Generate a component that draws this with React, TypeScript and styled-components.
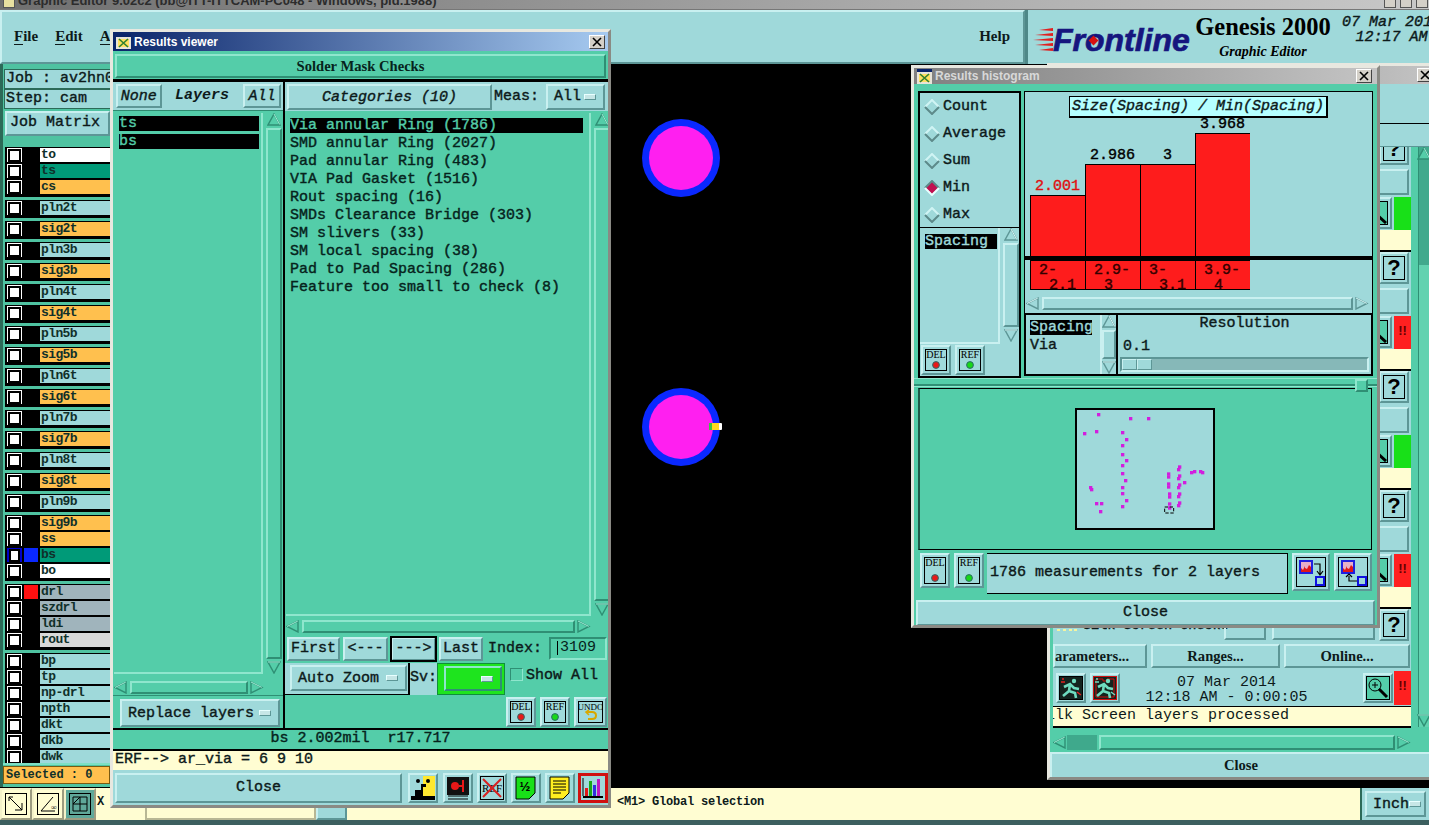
import React from 'react';
import styled, { createGlobalStyle, css } from 'styled-components';

const MONO = `"Liberation Mono", monospace`;
const SERIF = `"Liberation Serif", serif`;
const SANS = `"Liberation Sans", sans-serif`;
const TEAL = '#9fd9da';
const GREEN = '#54cda9';
const DARKGREEN = '#2f8a70';
const CREAM = '#fffdd2';
const ORANGE = '#ffc04e';

const raised = css`
  border: 2px solid;
  border-color: #c9f0f0 #5d9696 #5d9696 #c9f0f0;
  box-sizing: border-box;
`;
const raisedGreen = css`
  border: 2px solid;
  border-color: #8fe6cd #2f8f74 #2f8f74 #8fe6cd;
  box-sizing: border-box;
`;
const sunkenGreen = css`
  border: 2px solid;
  border-color: #2f8f74 #8fe6cd #8fe6cd #2f8f74;
  box-sizing: border-box;
`;
const noStroke = css`-webkit-text-stroke: 0;`;

const Global = createGlobalStyle`
  html, body { margin: 0; padding: 0; background: #000; overflow: hidden; }
  * { box-sizing: border-box; }
  svg text { -webkit-text-stroke: 0; }
`;

const Desktop = styled.div`
  position: relative;
  width: 1429px;
  height: 825px;
  overflow: hidden;
  display: flex;
  flex-direction: column;
  font-family: ${MONO};
  font-weight: 400;
  -webkit-text-stroke: 0.4px currentColor;
  font-size: 15px;
  color: #0d1a1a;
  background: #000;
`;

/* ---------- main window chrome ---------- */
const MainTitle = styled.div`
  height: 10px;
  flex: none;
  background: linear-gradient(90deg, #6f6f6f, #a8a8a8 60%, #c8c8c8);
  color: #2c2c2c;
  font: 700 13px/4px ${SANS};
  ${noStroke}
  padding-left: 3px;
  overflow: hidden;
  white-space: nowrap;
  display: flex;
  gap: 3px;
  border-bottom: 1px solid #777;
`;
const MainTitleIcon = styled.span`
  width: 12px;
  height: 8px;
  flex: none;
  background: #e8e0a0;
  border: 1px solid #555;
  border-top: none;
`;
const MainTitleText = styled.span`flex: 1; margin-top: -1px;`;
const WinCtl = styled.span`
  width: 12px; height: 8px; margin-right: 1px; background: #d4d0c8;
  border: 1px solid #555; border-top: none;
`;
const HeaderRow = styled.div`
  height: 54px;
  flex: none;
  display: flex;
  background: ${TEAL};
`;
const MenuBar = styled.div`
  flex: 1;
  ${raised}
  display: flex;
  align-items: center;
  padding: 0 13px 0 12px;
  font: 700 15px ${SERIF};
  ${noStroke}
  gap: 17px;
`;
const MenuItem = styled.span<{ $right?: boolean }>`
  ${p => p.$right && 'margin-left: auto;'}
  padding-bottom: 2px;
`;
const Under = styled.span`border-bottom: 1px solid #0d1a1a;`;
const BrandPanel = styled.div`
  width: 404px;
  flex: none;
  display: flex;
  position: relative;
  border-left: 3px solid #4e8888;
  padding-left: 5px;
  overflow: hidden;
  white-space: nowrap;
`;
const LogoRow = styled.div`display: flex; align-items: center; width: 160px; flex: none;`;
const LogoText = styled.span`
  font: italic 700 32px/1 ${SANS};
  -webkit-text-stroke: 0.7px #16167e;
  color: #16167e;
  margin-top: 6px;
`;
const BrandTitle = styled.div`
  width: 142px; flex: none; text-align: center; color: #000; margin-left: -1px;
  ${noStroke}
`;
const Genesis = styled.div`font: 700 24.5px/26px ${SERIF}; margin-top: 4px;`;
const Subtitle = styled.div`font: italic 700 14px/18px ${SERIF}; margin-top: 3px;`;
const BrandDate = styled.div`
  font: italic 400 15px/15px ${MONO};
  margin: 5px 0 0 8px;
  text-align: center;
  width: 100px;
`;

const Workspace = styled.div`flex: 1; display: flex; min-height: 0;`;

/* ---------- left layer panel ---------- */
const LeftPanel = styled.div`
  width: 110px;
  flex: none;
  background: #4fc3a1;
  border-left: 3px solid #2c6a58;
  display: flex;
  flex-direction: column;
  overflow: hidden;
`;
const InfoBox = styled.div<{ $mt?: number }>`
  height: 20px;
  margin-left: 1px;
  margin-top: ${p => p.$mt ?? 0}px;
  background: ${TEAL};
  border: 1px solid #2c6a58;
  border-right: none;
  line-height: 17px;
  padding-left: 1px;
  white-space: nowrap;
  overflow: hidden;
`;
const JobStrip = styled.div`
  height: 38px;
  padding: 2px 0 0 2px;
  flex: none;
`;
const JobBtn = styled.div`
  ${raised}
  height: 25px;
  background: ${TEAL};
  line-height: 20px;
  padding-left: 3px;
  white-space: nowrap;
  overflow: hidden;
`;
const LayerScroll = styled.div`
  flex: 1;
  min-height: 0;
  overflow: hidden;
  padding-left: 2px;
  display: flex;
  flex-direction: column;
  gap: 3px;
`;
const LayerGroup = styled.div`
  background: #000;
  padding: 1px 0 1px 2px;
  flex: none;
`;
const LayerRow = styled.div`
  display: flex;
  height: 16px;
  background: #000;
`;
const LayerCheck = styled.span<{ $on?: boolean }>`
  width: 15px;
  height: 14px;
  background: #fff;
  flex: none;
  display: flex;
  align-items: center;
  justify-content: center;
  ${p => p.$on && 'border: 2px solid #0000c8;'}
  &::after {
    content: '';
    width: 9px;
    height: 9px;
    border: 2px solid #000;
    background: #fff;
  }
`;
const Swatch = styled.span<{ $c?: string }>`
  width: 14px;
  height: 14px;
  margin: 0 2px 0 2px;
  flex: none;
  background: ${p => p.$c || '#000'};
`;
const LayerName = styled.span<{ $bg: string }>`
  flex: 1;
  height: 14px;
  background: ${p => p.$bg};
  font-size: 13px;
  font-weight: 700;
  letter-spacing: -0.6px;
  ${noStroke}
  line-height: 14px;
  padding-left: 1px;
  color: #10302a;
`;
const SelectedWrap = styled.div`
  height: 24px;
  flex: none;
  padding: 1px 0 2px 0;
  background: #4fc3a1;
  border-top: 2px solid #7de0c4;
`;
const SelectedBox = styled.div`
  background: ${ORANGE};
  height: 18px;
  font-size: 12px;
  font-weight: 700;
  ${noStroke}
  line-height: 16px;
  padding-left: 2px;
  border: 1px solid #7a5a10;
  color: #10302a;
`;

/* ---------- canvas ---------- */
const Canvas = styled.div`flex: 1; position: relative; background: #000;`;
const CanvasArt = styled.svg`position: absolute; inset: 0; width: 100%; height: 100%;`;

/* ---------- bottom bar ---------- */
const BottomBar = styled.div`
  height: 38px;
  flex: none;
  display: flex;
  background: ${CREAM};
  border-top: 1px solid #000;
  border-bottom: 5px solid #3c5f5f;
`;
const ToolBtn = styled.div<{ $pressed?: boolean }>`
  width: 32px;
  height: 32px;
  flex: none;
  border: 2px solid;
  border-color: #f4f2c8 #9d9c80 #9d9c80 #f4f2c8;
  background: ${p => (p.$pressed ? '#5fa89a' : CREAM)};
  display: flex;
  align-items: center;
  justify-content: center;
`;
const CoordLabel = styled.span`
  width: 49px;
  flex: none;
  font-size: 12px;
  font-weight: 700;
  ${noStroke}
  line-height: 28px;
  padding-left: 1px;
`;
const CoordInput = styled.div`
  width: 171px;
  flex: none;
  height: 32px;
  border: 2px solid #b8b794;
`;
const SmallBtn = styled.div`
  width: 31px;
  flex: none;
  height: 32px;
  background: ${TEAL};
  ${raised}
`;
const Message = styled.div`
  flex: 1;
  font-size: 12px;
  font-weight: 700;
  letter-spacing: -0.2px;
  ${noStroke}
  line-height: 28px;
  padding-left: 270px;
  white-space: nowrap;
`;
const UnitWrap = styled.div`
  width: 69px;
  flex: none;
  background: ${TEAL};
  border-left: 2px solid #2c6a58;
  padding: 3px;
`;
const Dropdown = styled.div<{ $green?: boolean }>`
  ${p => (p.$green ? raisedGreen : raised)}
  background: ${p => (p.$green ? '#1ee41e' : TEAL)};
  display: flex;
  align-items: center;
  justify-content: space-between;
  height: 100%;
  padding: 0 7px 0 6px;
  white-space: pre;
`;
const DropMark = styled.span`
  width: 12px;
  height: 6px;
  background: #c6e6e6;
  border: 1px solid;
  border-color: #e8ffff #5d9696 #5d9696 #e8ffff;
  flex: none;
`;

/* ---------- floating windows ---------- */
const Win = styled.div<{ $l: number; $t: number; $w: number; $h: number }>`
  position: absolute;
  left: ${p => p.$l}px;
  top: ${p => p.$t}px;
  width: ${p => p.$w}px;
  height: ${p => p.$h}px;
  background: #c8c8c0;
  border: 3px solid;
  border-color: #e8e8e0 #8a8a84 #8a8a84 #e8e8e0;
  display: flex;
  flex-direction: column;
  overflow: hidden;
`;
const WinTitle = styled.div<{ $active?: boolean; $h: number }>`
  height: ${p => p.$h}px;
  flex: none;
  display: flex;
  align-items: center;
  padding: 0 3px;
  gap: 3px;
  font: 700 12px ${SANS};
  ${noStroke}
  color: ${p => (p.$active ? '#fff' : '#d8d8d8')};
  background: ${p =>
    p.$active
      ? 'linear-gradient(90deg, #0a246a, #a6caf0)'
      : 'linear-gradient(90deg, #808080, #c4c4c4)'};
`;
const WinTitleText = styled.span`flex: 1; white-space: nowrap;`;
const CloseX = styled.span<{ $mr?: number }>`
  width: 16px;
  height: 14px;
  flex: none;
  margin-right: ${p => p.$mr ?? 0}px;
  background: #d4d0c8;
  border: 1px solid;
  border-color: #fff #444 #444 #fff;
  display: flex;
  align-items: center;
  justify-content: center;
`;
const WinBody = styled.div`
  flex: 1;
  min-height: 0;
  display: flex;
  flex-direction: column;
  background: ${TEAL};
`;

/* ---------- results viewer ---------- */
const HeadStrip = styled.div`
  height: 28px;
  flex: none;
  background: ${GREEN};
  padding: 3px 2px 1px 2px;
`;
const HeadBtn = styled.div`
  ${raisedGreen}
  height: 24px;
  text-align: center;
  font: 700 14.6px/20px ${SERIF};
  ${noStroke}
  color: #06231c;
`;
const BlackRule = styled.div<{ $h?: number }>`
  height: ${p => p.$h ?? 2}px;
  flex: none;
  background: #000;
`;
const Cols = styled.div`
  height: 646px;
  flex: none;
  display: flex;
  background: #000;
  gap: 2px;
`;
const LeftCol = styled.div`
  width: 170px;
  flex: none;
  display: flex;
  flex-direction: column;
  background: ${GREEN};
`;
const RightCol = styled.div`
  flex: 1;
  display: flex;
  flex-direction: column;
  background: ${GREEN};
`;
const TabRow = styled.div`
  height: 29px;
  flex: none;
  background: ${TEAL};
  display: flex;
  align-items: center;
  padding: 0 2px 0 3px;
  border-bottom: 1px solid ${DARKGREEN};
`;
const TabBtn = styled.div<{ $w: number; $flat?: boolean; $ml?: number }>`
  ${p => !p.$flat && raised}
  width: ${p => p.$w}px;
  margin-left: ${p => p.$ml ?? 0}px;
  height: 24px;
  text-align: center;
  font-style: italic;
  line-height: 22px;
  ${p => p.$flat && 'line-height: 24px; font-weight: 700; -webkit-text-stroke: 0;'}
`;
const ListWrap = styled.div<{ $h: number }>`
  height: ${p => p.$h}px;
  flex: none;
  display: flex;
  padding: 2px 0 0 1px;
`;
const ListBox = styled.div<{ $w: number; $pt: number; $pl: number }>`
  width: ${p => p.$w}px;
  flex: none;
  border-right: 2px solid #8fe6cd;
  border-bottom: 2px solid #8fe6cd;
  padding: ${p => p.$pt}px 0 0 ${p => p.$pl}px;
  color: #06231c;
`;
const ListItem = styled.div<{ $sel?: boolean; $w?: number; $fg?: string }>`
  height: 15px;
  line-height: 15px;
  margin-bottom: 3px;
  white-space: pre;
  ${p => p.$w && `width: ${p.$w}px;`}
  ${p => p.$sel && `background: #000; color: ${p.$fg || GREEN};`}
`;

const VScrollBox = styled.div<{ $h: number; $ml?: number }>`
  width: ${p => (p.$ml === 0 ? 14 : 16)}px;
  height: ${p => p.$h}px;
  flex: none;
  margin-left: ${p => p.$ml ?? 3}px;
  display: flex;
  flex-direction: column;
  align-items: center;
`;
const VThumb = styled.div<{ $teal?: boolean }>`
  flex: 1;
  width: 100%;
  margin: 2px 0;
  border: 2px solid;
  border-color: ${p =>
    p.$teal ? '#c9f0f0 #5d9696 #5d9696 #c9f0f0' : '#8fe6cd #2f8f74 #2f8f74 #8fe6cd'};
`;
const HScrollBox = styled.div<{ $w: number; $mt?: number; $ml?: number }>`
  width: ${p => p.$w}px;
  height: 13px;
  flex: none;
  margin-top: ${p => p.$mt ?? 0}px;
  margin-left: ${p => p.$ml ?? 1}px;
  display: flex;
  align-items: center;
`;
const HThumb = styled.div<{ $teal?: boolean }>`
  flex: 1;
  height: 100%;
  margin: 0 2px;
  border: 2px solid;
  border-color: ${p =>
    p.$teal ? '#c9f0f0 #5d9696 #5d9696 #c9f0f0' : '#8fe6cd #2f8f74 #2f8f74 #8fe6cd'};
`;
const ReplaceWrap = styled.div`
  height: 34px;
  flex: none;
  margin-top: 1px;
  padding: 3px 3px 2px 7px;
  border-top: 1px solid #2f8f74;
`;
const CatRow = styled.div`
  height: 29px;
  flex: none;
  display: flex;
  align-items: center;
  padding: 0 4px 0 2px;
  background: ${TEAL};
  gap: 2px;
`;
const CatBtn = styled.div`
  ${raised}
  width: 205px;
  height: 26px;
  text-align: center;
  font-style: italic;
  line-height: 24px;
`;
const MeasLabel = styled.span`width: 50px; flex: none;`;
const DropSlot = styled.div<{ $w?: number; $h?: number }>`
  flex: none;
  ${p => p.$w && `width: ${p.$w}px;`}
  height: ${p => p.$h ?? 26}px;
`;
const NavRow = styled.div`
  height: 25px;
  flex: none;
  margin-top: 3px;
  display: flex;
  align-items: center;
  padding-left: 2px;
  gap: 3px;
`;
const NavBtn = styled.div<{ $w: number; $on?: boolean }>`
  width: ${p => p.$w}px;
  height: 24px;
  flex: none;
  background: ${TEAL};
  text-align: center;
  line-height: 19px;
  ${raised}
  ${p => p.$on && 'outline: 2px solid #000; outline-offset: -1px;'}
`;
const IndexLabel = styled.span`width: 58px; flex: none; margin-left: 2px; line-height: 22px;`;
const IndexInput = styled.div`
  ${sunkenGreen}
  width: 58px;
  height: 23px;
  ${noStroke}
  line-height: 17px;
  padding-left: 4px;
  display: flex;
  color: #06231c;
`;
const Caret = styled.span`
  width: 5px;
  height: 14px;
  margin: 2px 0 0 0;
  flex: none;
  border-left: 1px solid #000;
  transform: translateX(2px);
`;
const AutoRow = styled.div`
  height: 32px;
  flex: none;
  margin-top: 2px;
  display: flex;
  align-items: stretch;
`;
const AutoWrap = styled.div`
  width: 125px;
  flex: none;
  padding: 2px 1px 3px 5px;
  background: ${TEAL};
  border-right: 2px solid #000;
  border-bottom: 1px solid #000;
`;
const SvLabel = styled.div`
  width: 27px;
  flex: none;
  line-height: 30px;
  background: ${TEAL};
`;
const SvWrap = styled.div`
  width: 68px;
  flex: none;
  background: #1ee41e;
  padding: 2px 2px 3px 6px;
  border: 1px solid #0f8f3a;
`;
const ShowAll = styled.div`
  display: flex;
  align-items: flex-start;
  padding: 5px 0 0 5px;
  gap: 3px;
  white-space: pre;
  line-height: 15px;
`;
const ShowBox = styled.span`
  width: 13px;
  height: 13px;
  flex: none;
  ${sunkenGreen}
  border-width: 1px;
`;
const ActionRow = styled.div`
  flex: 1;
  display: flex;
  justify-content: flex-end;
  gap: 4px;
  padding: 2px 3px 0 0;
`;
const StatusLine = styled.div`
  height: 19px;
  flex: none;
  background: ${GREEN};
  text-align: center;
  line-height: 18px;
  white-space: pre;
  color: #06231c;
`;
const CreamLine = styled.div`
  height: 19px;
  flex: none;
  background: ${CREAM};
  line-height: 18px;
  padding-left: 2px;
  white-space: pre;
`;
const BottomRow = styled.div`
  flex: 1;
  background: ${TEAL};
  display: flex;
  align-items: center;
  padding: 0 2px 0 2px;
`;
const BigClose = styled.div`
  width: 287px;
  height: 30px;
  flex: none;
  margin-right: 6px;
  background: ${TEAL};
  ${raised}
  text-align: center;
  line-height: 26px;
`;
const IconBtn = styled.div<{ $w?: number; $h?: number; $mr?: number; $red?: boolean }>`
  width: ${p => p.$w ?? 30}px;
  height: ${p => p.$h ?? 30}px;
  flex: none;
  margin-right: ${p => p.$mr ?? 0}px;
  background: ${TEAL};
  ${raised}
  display: flex;
  align-items: center;
  justify-content: center;
  padding: 1px;
  ${p => p.$red && 'border-color: #d01010;border-width: 3px;'}
`;

/* ---------- histogram ---------- */
const HistBody = styled.div`
  flex: 1;
  display: flex;
  flex-direction: column;
  background: ${GREEN};
`;
const Upper = styled.div`
  height: 287px;
  flex: none;
  margin-top: 7px;
  padding-left: 4px;
  display: flex;
  gap: 3px;
`;
const HistLeft = styled.div`
  width: 103px;
  flex: none;
  display: flex;
  flex-direction: column;
  background: ${TEAL};
  border: 2px solid #000;
`;
const Radios = styled.div`
  height: 135px;
  flex: none;
  border-bottom: 1px solid #000;
  display: flex;
  flex-direction: column;
`;
const RadioRow = styled.div`
  height: 27px;
  flex: none;
  display: flex;
  align-items: center;
  padding-left: 4px;
  gap: 3px;
`;
const HistList = styled.div`
  height: 116px;
  flex: none;
  display: flex;
`;
const SmallList = styled.div`
  flex: 1;
  border-right: 2px solid #c9f0f0;
  border-bottom: 2px solid #c9f0f0;
  padding: 6px 0 0 5px;
`;
const Pair = styled.div`display: flex; gap: 4px; padding: 1px 0 0 1px;`;
const HistRight = styled.div`
  width: 349px;
  flex: none;
  display: flex;
  flex-direction: column;
`;
const ChartPanel = styled.div`
  height: 222px;
  flex: none;
  background: ${TEAL};
  border: 1px solid #000;
  border-bottom: none;
  display: flex;
  flex-direction: column;
  padding-top: 4px;
`;
const ChartTitle = styled.div`
  width: 259px;
  height: 22px;
  flex: none;
  margin-left: 44px;
  background: #b6ffff;
  border: 1px solid #000;
  border-right-width: 2px;
  border-bottom-width: 2px;
  font-style: italic;
  text-align: center;
  line-height: 20px;
  white-space: nowrap;
`;
const Bars = styled.div`
  height: 138px;
  flex: none;
  display: flex;
  align-items: flex-end;
  padding-left: 5px;
`;
const BarCol = styled.div`
  width: 55px;
  flex: none;
  display: flex;
  flex-direction: column;
  align-items: center;
  line-height: 16px;
`;
const BarRect = styled.div`
  width: 100%;
  background: #fe1c1c;
  border: 1px solid #000;
  border-bottom: none;
  border-right: none;
`;
const BarValue = styled.span<{ $min?: boolean }>`
  color: ${p => (p.$min ? '#e01010' : '#000')};
`;
const AxisRule = styled.div`height: 4px; flex: none; background: #000;`;
const Axis = styled.div`
  height: 30px;
  flex: none;
  display: flex;
  padding-left: 5px;
`;
const AxisCell = styled.div`
  width: 55px;
  flex: none;
  height: 30px;
  background: #fe1c1c;
  border: 1px solid #000;
  border-right: none;
  overflow: hidden;
  color: #300;
  line-height: 15px;
  padding-top: 2px;
`;
const AxisLine = styled.div<{ $pl: number }>`padding-left: ${p => p.$pl}px; white-space: pre;`;
const ResRow = styled.div`
  height: 63px;
  flex: none;
  display: flex;
  border: 2px solid #000;
  background: ${TEAL};
`;
const ResList = styled.div`
  width: 76px;
  flex: none;
  padding: 5px 0 0 4px;
  border-right: 2px solid #c9f0f0;
  overflow: hidden;
`;
const ResPanel = styled.div`
  flex: 1;
  border-left: 2px solid #000;
  display: flex;
  flex-direction: column;
`;
const ResTitle = styled.div`text-align: center; line-height: 18px; height: 18px;`;
const ResValue = styled.div`padding-left: 5px; line-height: 18px; margin-top: 5px;`;
const ResTrack = styled.div`
  height: 15px;
  margin: 1px 2px 0 2px;
  background: #86b8b8;
  border: 2px solid;
  border-color: #5d9696 #c9f0f0 #c9f0f0 #5d9696;
  display: flex;
`;
const ResThumb = styled.div`
  width: 15px;
  height: 100%;
  background: ${TEAL};
  border: 1px solid;
  border-color: #c9f0f0 #5d9696 #5d9696 #c9f0f0;
`;
const Sash = styled.div`
  height: 10px;
  flex: none;
  position: relative;
  border-top: 1px solid #8fe6cd;
  &::before {
    content: '';
    position: absolute;
    left: 0; right: 0; top: 5px; height: 2px;
    background: #2f8f74;
    border-bottom: 1px solid #8fe6cd;
  }
  &::after {
    content: '';
    position: absolute;
    right: 9px; top: 0;
    width: 9px; height: 9px;
    background: ${GREEN};
    border: 2px solid;
    border-color: #8fe6cd #2f8f74 #2f8f74 #8fe6cd;
  }
`;
const Preview = styled.div`
  height: 162px;
  flex: none;
  margin: 0 5px 0 4px;
  border: 1px solid #000;
  border-left: 2px solid #1d5a48;
  display: flex;
  align-items: flex-start;
  padding-left: 155px;
  padding-top: 19px;
`;
const Thumb = styled.div`
  width: 140px;
  height: 122px;
  background: ${TEAL};
  border: 2px solid #000;
`;
const Footer = styled.div`
  height: 47px;
  flex: none;
  display: flex;
  align-items: flex-start;
  padding: 3px 0 0 6px;
  gap: 4px;
`;
const FootLabel = styled.div`
  width: 301px;
  height: 41px;
  flex: none;
  background: ${TEAL};
  border: 1px solid #000;
  border-left: 0;
  line-height: 38px;
  padding-left: 3px;
  white-space: pre;
  margin-left: -1px;
`;
const HistClose = styled.div`
  height: 26px;
  flex: none;
  margin: 3px 2px 0 2px;
  background: ${TEAL};
  ${raised}
  text-align: center;
  line-height: 22px;
`;

/* ---------- checks window behind ---------- */
const ChecksBody = styled.div`
  flex: 1;
  display: flex;
  background: ${TEAL};
  min-height: 0;
  flex-direction: column;
`;
const ChecksTop = styled.div`
  height: 40px;
  flex: none;
  border-bottom: 1px solid #000;
`;
const ChecksGap = styled.div`height: 23px; flex: none; border-bottom: 1px solid #5d9696;`;
const ChecksMain = styled.div`
  flex: 1;
  display: flex;
  background: ${GREEN};
  min-height: 0;
  padding-left: 3px;
`;
const ChecksCol = styled.div`
  width: 358px;
  flex: none;
  display: flex;
  flex-direction: column;
`;
const Blocks = styled.div`
  height: 497px;
  flex: none;
  overflow: hidden;
  background: ${TEAL};
`;
const BlocksInner = styled.div`margin-top: -14px;`;
const CheckBlock = styled.div`
  height: 119px;
  display: flex;
  flex-direction: column;
  align-items: flex-end;
`;
const QBtn = styled.div`
  width: 30px;
  height: 32px;
  flex: none;
  margin-right: 2px;
  ${raised}
  padding: 2px;
`;
const QInner = styled.div`
  height: 100%;
  border: 1px solid #000;
  font: 700 22px/22px ${SANS};
  ${noStroke}
  text-align: center;
  color: #000;
`;
const BlankBtn = styled.div`
  width: 350px;
  height: 26px;
  flex: none;
  margin: 4px 2px 2px 0;
  ${raised}
`;
const StatusRow = styled.div`
  height: 33px;
  flex: none;
  display: flex;
  gap: 2px;
`;
const MiniBtn = styled.div`
  width: 29px;
  height: 32px;
  ${raised}
  padding: 2px;
`;
const MiniInner = styled.div`
  height: 100%;
  background: ${GREEN};
  border: 1px solid #000;
  overflow: hidden;
  display: flex;
  align-items: flex-end;
  justify-content: flex-end;
`;
const StatusLight = styled.div<{ $c: string; $h?: number; $ml?: number }>`
  width: 17px;
  ${p => p.$h && `height: ${p.$h}px;`}
  margin-left: ${p => p.$ml ?? 0}px;
  background: ${p => p.$c};
  color: #600;
  text-align: center;
  font: 700 13px/30px ${SANS};
  ${noStroke}
`;
const CreamCell = styled.div`
  width: 358px;
  height: 22px;
  flex: none;
  background: ${CREAM};
  border-bottom: 2px solid #000;
`;
const SilkRow = styled.div`
  display: flex;
  width: 100%;
  height: 35px;
  align-items: flex-start;
`;
const SilkName = styled.div`
  width: 141px;
  flex: none;
  white-space: pre;
  margin: 9px 0 0 5px;
  line-height: 16px;
  font-size: 13.5px;
`;
const ErfBtn = styled.div`
  width: 42px;
  height: 31px;
  flex: none;
  ${raised}
  text-align: center;
  line-height: 25px;
`;
const SilkInput = styled.div`
  width: 103px;
  height: 31px;
  flex: none;
  margin: 0 auto 0 6px;
  ${raised}
`;
const ParamRow = styled.div`
  height: 26px;
  flex: none;
  display: flex;
  gap: 4px;
  background: ${TEAL};
  overflow: hidden;
`;
const ParamBtn = styled.div<{ $w: number; $clip?: boolean }>`
  ${raised}
  width: ${p => p.$w}px;
  flex: none;
  height: 24px;
  font: 700 14.6px/20px ${SERIF};
  ${noStroke}
  text-align: center;
  ${p => p.$clip && 'text-align: right; padding-right: 20px; white-space: nowrap; overflow: hidden;'}
`;
const ProgRow = styled.div`
  height: 36px;
  flex: none;
  display: flex;
  background: ${TEAL};
  align-items: center;
  padding-left: 3px;
  gap: 4px;
`;
const ProgCenter = styled.div`
  flex: 1;
  text-align: center;
  font-size: 15px;
  line-height: 15px;
  padding: 4px 30px 0 0;
  white-space: pre;
  ${noStroke}
`;
const ProgMsg = styled.div`
  height: 22px;
  flex: none;
  background: ${CREAM};
  border-top: 1px solid #000;
  border-bottom: 2px solid #000;
  font-size: 15px;
  ${noStroke}
  line-height: 18px;
  white-space: pre;
  overflow: hidden;
`;
const ProgMsgIn = styled.div`margin-left: -16px;`;
const Trough = styled.div`
  width: 11px;
  flex: none;
  margin-left: 7px;
  height: 580px;
  background: linear-gradient(#41a98d 118px, #62d2b0 118px);
  border-left: 1px solid #2f8f74;
  display: flex;
  flex-direction: column;
  justify-content: space-between;
  align-items: center;
`;
const CheckHS = styled.div`
  height: 15px;
  flex: none;
  margin-top: 7px;
  display: flex;
  align-items: center;
`;
const HSDark = styled.div`
  width: 30px;
  flex: none;
  height: 100%;
  background: #3fa98c;
`;
const CheckClose = styled.div`
  height: 27px;
  flex: none;
  margin-top: 2px;
  background: ${TEAL};
  ${raised}
  text-align: center;
  font: 700 14.6px/23px ${SERIF};
  ${noStroke}
`;
const CloseWrap = styled.div`
  background: ${GREEN};
  width: 382px;
  margin-left: -3px;
`;
const LogoDiamond = styled.span`
  position: absolute;
  left: 62px;
  top: 27px;
  width: 7px;
  height: 7px;
  background: #d81010;
  transform: rotate(45deg);
`;

/* ---------- small drawings ---------- */
const WindowIcon = () => (
  <svg width="15" height="15" viewBox="0 0 15 15">
    <rect width="15" height="15" fill="#e8e4d8" />
    <rect width="15" height="3" fill="#0a246a" />
    <rect x="2" y="5" width="11" height="8" fill="#ffe060" />
    <path d="M3 5l9 8M12 5l-9 8" stroke="#308030" strokeWidth="1.6" />
  </svg>
);
const XMark = () => (
  <svg width="10" height="10" viewBox="0 0 10 10">
    <path d="M1 1l8 8M9 1l-8 8" stroke="#000" strokeWidth="1.6" />
  </svg>
);
const ArrowSvg = styled.svg`flex: none;`;
const Arrow = ({ d, teal }: { d: 'u' | 'd' | 'l' | 'r'; teal?: boolean }) => {
  const pts = { u: '7,1 13,12 1,12', d: '1,1 13,1 7,12', l: '1,6.5 12,1 12,12', r: '1,1 12,6.5 1,12' }[d];
  return (
    <ArrowSvg width="14" height="13" viewBox="0 0 14 13">
      <polygon points={pts} fill={teal ? '#9fd9da' : '#54cda9'} stroke={teal ? '#5d9696' : '#2f8f74'} strokeWidth="1.4" />
      <polyline points={pts} fill="none" stroke={teal ? '#d8f6f6' : '#a0ecd6'} strokeWidth="1" strokeDasharray="12 30" />
    </ArrowSvg>
  );
};
const VScroll = ({ h, teal, ml }: { h: number; teal?: boolean; ml?: number }) => (
  <VScrollBox $h={h} $ml={ml}>
    <Arrow d="u" teal={teal} />
    <VThumb $teal={teal} />
    <Arrow d="d" teal={teal} />
  </VScrollBox>
);
const HScroll = ({ w, mt, teal, ml }: { w: number; mt?: number; teal?: boolean; ml?: number }) => (
  <HScrollBox $w={w} $mt={mt} $ml={ml}>
    <Arrow d="l" teal={teal} />
    <HThumb $teal={teal} />
    <Arrow d="r" teal={teal} />
  </HScrollBox>
);
const DotButton = ({ label, color, w = 30, h = 30 }: { label: string; color: string; w?: number; h?: number }) => (
  <IconBtn $w={w} $h={h}>
    <svg width={w - 8} height={h - 8} viewBox={`0 0 ${w - 8} ${h - 8}`}>
      <rect x="0.5" y="0.5" width={w - 9} height={h - 9} fill="none" stroke="#000" />
      <text x={(w - 8) / 2} y="9" textAnchor="middle" fontFamily={SERIF} fontSize="10" fill="#000">{label}</text>
      <circle cx={(w - 8) / 2} cy={h - 14} r="3.4" fill={color} stroke="#2a6a6a" />
    </svg>
  </IconBtn>
);
const UndoButton = () => (
  <IconBtn $w={33} $h={30}>
    <svg width="25" height="22" viewBox="0 0 25 22">
      <rect x="0.5" y="0.5" width="24" height="21" fill="none" stroke="#000" />
      <text x="12.5" y="9" textAnchor="middle" fontFamily={SERIF} fontSize="9" fill="#000">UNDO</text>
      <path d="M9 11h5q4 0 4 3.5t-4 3.5h-4" fill="none" stroke="#d8a800" strokeWidth="2" />
      <path d="M11 9l-3 2 3 3" fill="none" stroke="#d8a800" strokeWidth="1.6" />
    </svg>
  </IconBtn>
);
const Icon1 = () => (
  <svg width="24" height="24" viewBox="0 0 24 24">
    <rect width="12" height="24" fill="#9fd9da" />
    <rect x="12" width="12" height="24" fill="#ffe830" />
    <rect y="20" width="24" height="4" fill="#000" />
    <circle cx="7" cy="5" r="2" fill="#000" />
    <path d="M10 20V8h5v3h-3v9zM4 14h6v6H4z" fill="#000" />
    <circle cx="17" cy="5" r="2" fill="#000" />
  </svg>
);
const Icon2 = () => (
  <svg width="24" height="24" viewBox="0 0 24 24">
    <rect x="1" y="1" width="22" height="18" fill="#111" />
    <circle cx="9" cy="10" r="4" fill="#e81818" />
    <rect x="13" y="9" width="5" height="2" fill="#e81818" />
    <rect x="16" y="4" width="2" height="12" fill="#e81818" />
    <path d="M2 20h20M2 23h20" stroke="#000" strokeWidth="1.2" />
  </svg>
);
const Icon3 = () => (
  <svg width="24" height="24" viewBox="0 0 24 24">
    <rect x="0.5" y="0.5" width="23" height="23" fill="none" stroke="#000" />
    <text x="12" y="16" textAnchor="middle" fontFamily={SERIF} fontSize="11" fill="#000">REF</text>
    <path d="M3 3l18 18M21 3L3 21" stroke="#d82020" strokeWidth="2" />
  </svg>
);
const Icon4 = () => (
  <svg width="24" height="24" viewBox="0 0 24 24">
    <polygon points="2,1 21,1 21,17 15,23 2,23" fill="#18e018" stroke="#000" />
    <text x="11" y="15" textAnchor="middle" fontFamily={SANS} fontWeight="700" fontSize="13" fill="#000">½</text>
  </svg>
);
const Icon5 = () => (
  <svg width="24" height="24" viewBox="0 0 24 24">
    <polygon points="2,1 21,1 21,17 15,23 2,23" fill="#ffee20" stroke="#000" />
    <path d="M5 5h13M5 8h13M5 11h13M5 14h13M5 17h8" stroke="#000" strokeWidth="1.2" />
  </svg>
);
const Icon6 = () => (
  <svg width="22" height="22" viewBox="0 0 22 22">
    <rect x="3" y="11" width="3" height="8" fill="#e01818" />
    <rect x="7" y="4" width="3" height="15" fill="#18a818" />
    <rect x="11" y="8" width="3" height="11" fill="#3030e0" />
    <rect x="15" y="2" width="3" height="17" fill="#c018c0" />
    <path d="M1 20h20" stroke="#000" strokeWidth="2" />
    <path d="M1 1v18" stroke="#000" />
  </svg>
);
const HistSwap = ({ back }: { back?: boolean }) => (
  <svg width="30" height="30" viewBox="0 0 30 30">
    <rect x="0.5" y="0.5" width="29" height="29" fill="none" stroke="#000" />
    <rect x="3" y="3" width="14" height="14" fill="#2020e0" />
    <rect x="5" y="5" width="10" height="10" fill="#e8b0c8" />
    <path d="M5 15v-4l2 2 2-4v2l2 1 2-4 2 2v5z" fill="#e01818" />
    <rect x="20" y="20" width="8" height="8" fill="none" stroke="#1010e0" strokeWidth="2" />
    {back ? (
      <path d="M19 24h-8V19M8 20l3-3 3 3" fill="none" stroke="#000" strokeWidth="1.2" />
    ) : (
      <path d="M18 7h6v10M21 14l3 4 3-4" fill="none" stroke="#000" strokeWidth="1.2" />
    )}
  </svg>
);
const Runner = ({ red }: { red?: boolean }) => (
  <svg width="24" height="24" viewBox="0 0 24 24">
    <rect x="0.5" y="0.5" width="23" height="23" fill="#14241f" stroke={red ? '#d01010' : '#000'} />
    {red && <path d="M3 3h7v2h4V3h7v18H3z" fill="none" stroke="#d01010" />}
    <circle cx="15" cy="5" r="2.2" fill="#6fdcc0" />
    <path d="M5 11l6-3 4 4 5 1M11 8l-1 7-6 5M10 15l6 2 1 5" fill="none" stroke="#6fdcc0" strokeWidth="2.6" />
    <path d="M2 6h4M3 3h2M18 16l4 3" stroke={red ? '#6fdcc0' : '#e02020'} strokeWidth="1.4" />
  </svg>
);
const Magnifier = () => (
  <svg width="24" height="24" viewBox="0 0 24 24">
    <rect x="0.5" y="0.5" width="23" height="23" fill={GREEN} stroke="#000" />
    <circle cx="9" cy="9" r="6" fill="none" stroke="#000" />
    <path d="M6 9h6M9 6v6" stroke="#000" />
    <path d="M13 13l8 8" stroke="#000" strokeWidth="3" />
  </svg>
);
const MiniTail = () => (
  <svg width="11" height="11" viewBox="0 0 11 11">
    <path d="M0 1l10 9" stroke="#000" strokeWidth="3" />
  </svg>
);
const Trees = () => (
  <svg width="22" height="10" viewBox="0 0 22 10" style={{ marginLeft: 3, marginTop: 12 }}>
    <path d="M0 6l3-6 3 6 2-6 3 6 3-6 2 6 3-6 3 6z" fill="#0e6a50" />
    <path d="M1 9h3M7 9h3M13 9h3M18 9h3" stroke="#f4f4a0" strokeWidth="2" />
  </svg>
);
const Diamond = ({ on }: { on?: boolean }) => (
  <svg width="16" height="16" viewBox="0 0 16 16" style={{ flex: 'none' }}>
    <polygon points="8,1 15,8 8,15 1,8" fill={on ? '#c01050' : '#9fd9da'} />
    <polyline points="1,8 8,1 15,8" fill="none" stroke={on ? '#5d8a8a' : '#d0f4f4'} strokeWidth="2" />
    <polyline points="1,8 8,15 15,8" fill="none" stroke={on ? '#e8ffff' : '#5d8a8a'} strokeWidth="2" />
  </svg>
);
const ToolGlyph = ({ kind }: { kind: number }) => (
  <svg width="22" height="22" viewBox="0 0 22 22">
    <rect x="0.5" y="0.5" width="21" height="21" fill="none" stroke="#000" />
    {kind === 0 && <path d="M4 4l13 13M17 10v7h-7M4 4h4M4 4v4" fill="none" stroke="#000" />}
    {kind === 1 && (
      <>
        <path d="M4 18l12-14M4 18h14" fill="none" stroke="#000" />
        <text x="14" y="17" fontFamily={SERIF} fontSize="8" fill="#000">∞</text>
      </>
    )}
    {kind === 2 && <path d="M4 4h14v14H4zM4 11h14M11 4v14M4 11l7-7" fill="none" stroke="#000" />}
  </svg>
);

/* ---------- data ---------- */
const T = TEAL;
const O = ORANGE;
const W = '#ffffff';
const G = '#009a78';
const S = '#a0b4bc';
type L = { n: string; bg: string; sw?: string; on?: boolean };
const GROUPS: L[][] = [
  [{ n: 'to', bg: W }, { n: 'ts', bg: G }, { n: 'cs', bg: O }],
  [{ n: 'pln2t', bg: T }], [{ n: 'sig2t', bg: O }], [{ n: 'pln3b', bg: T }], [{ n: 'sig3b', bg: O }],
  [{ n: 'pln4t', bg: T }], [{ n: 'sig4t', bg: O }], [{ n: 'pln5b', bg: T }], [{ n: 'sig5b', bg: O }],
  [{ n: 'pln6t', bg: T }], [{ n: 'sig6t', bg: O }], [{ n: 'pln7b', bg: T }], [{ n: 'sig7b', bg: O }],
  [{ n: 'pln8t', bg: T }], [{ n: 'sig8t', bg: O }], [{ n: 'pln9b', bg: T }],
  [{ n: 'sig9b', bg: O }, { n: 'ss', bg: O }, { n: 'bs', bg: G, sw: '#0a28ff', on: true }, { n: 'bo', bg: W }],
  [{ n: 'drl', bg: S, sw: '#ff1010' }, { n: 'szdrl', bg: S }, { n: 'ldi', bg: S }, { n: 'rout', bg: '#d8d8d8' }],
  [{ n: 'bp', bg: T }, { n: 'tp', bg: T }, { n: 'np-drl', bg: T }, { n: 'npth', bg: T }, { n: 'dkt', bg: T }, { n: 'dkb', bg: T }, { n: 'dwk', bg: T }],
];
const CATS = [
  'Via annular Ring (1786)', 'SMD annular Ring (2027)', 'Pad annular Ring (483)', 'VIA Pad Gasket (1516)',
  'Rout spacing (16)', 'SMDs Clearance Bridge (303)', 'SM slivers (33)', 'SM local spacing (38)',
  'Pad to Pad Spacing (286)', 'Feature too small to check (8)',
];
const BARS = [
  { v: '2.001', h: 61, min: true, a: '2-', ap: 8, b: '2.1', bp: 18 },
  { v: '2.986', h: 92, a: '2.9-', ap: 8, b: '3', bp: 18 },
  { v: '3', h: 92, a: '3-', ap: 8, b: '3.1', bp: 18 },
  { v: '3.968', h: 123, a: '3.9-', ap: 8, b: '4', bp: 18 },
];
const DOTS = [
  [553,106],[649,118],[703,118],[511,163],[547,157],[625,160],[637,181],[625,199],[625,226],[637,244],[625,259],
  [625,283],[634,304],[625,325],[625,343],[637,364],[625,382],[529,325],[532,331],[547,373],[562,373],[559,397],
  [763,284],[763,293],[763,314],[763,323],[766,344],[766,353],[766,374],[766,386],[796,263],[793,271],[796,290],
  [793,298],[796,317],[793,325],[796,344],[793,352],[796,371],[793,379],[811,310],[832,280],[841,277],[859,277],[865,280],
];
const RADIOS = ['Count', 'Average', 'Sum', 'Min', 'Max'];

const Block = ({ c, bang }: { c: string; bang?: boolean }) => (
  <CheckBlock>
    <QBtn><QInner>?</QInner></QBtn>
    <BlankBtn />
    <StatusRow>
      <MiniBtn><MiniInner><MiniTail /></MiniInner></MiniBtn>
      <StatusLight $c={c}>{bang ? '!!' : ''}</StatusLight>
    </StatusRow>
    <CreamCell />
  </CheckBlock>
);

export default function App() {
  return (
    <Desktop>
      <Global />
      <MainTitle>
        <MainTitleIcon />
        <MainTitleText>Graphic Editor 9.02c2 (bb@ITT-ITTCAM-PC048 - Windows, pid.1988)</MainTitleText>
        <WinCtl /><WinCtl /><WinCtl />
      </MainTitle>
      <HeaderRow>
        <MenuBar>
          <MenuItem><Under>F</Under>ile</MenuItem>
          <MenuItem><Under>E</Under>dit</MenuItem>
          <MenuItem><Under>A</Under>ctions</MenuItem>
          <MenuItem $right>Help</MenuItem>
        </MenuBar>
        <BrandPanel>
          <LogoRow>
            <svg width="20" height="24" viewBox="0 0 20 24" style={{ flex: 'none', marginTop: 6 }}>
              <path d="M20 0 6 2 20 3zM20 5 2 7 20 8zM20 10 0 12 20 13zM20 15 2 17 20 18zM20 20 6 22 20 23z" fill="#e02020" />
            </svg>
            <LogoText>Frontline</LogoText>
            <LogoDiamond />
          </LogoRow>
          <BrandTitle>
            <Genesis>Genesis 2000</Genesis>
            <Subtitle>Graphic Editor</Subtitle>
          </BrandTitle>
          <BrandDate>07 Mar 2014<br />12:17 AM</BrandDate>
        </BrandPanel>
      </HeaderRow>
      <Workspace>
        <LeftPanel>
          <InfoBox $mt={5}>Job : av2hn0</InfoBox>
          <InfoBox>Step: cam</InfoBox>
          <JobStrip><JobBtn>Job Matrix</JobBtn></JobStrip>
          <LayerScroll>
            {GROUPS.map((g, i) => (
              <LayerGroup key={i}>
                {g.map(l => (
                  <LayerRow key={l.n}>
                    <LayerCheck $on={l.on} />
                    <Swatch $c={l.sw} />
                    <LayerName $bg={l.bg}>{l.n}</LayerName>
                  </LayerRow>
                ))}
              </LayerGroup>
            ))}
          </LayerScroll>
          <SelectedWrap><SelectedBox>Selected : 0</SelectedBox></SelectedWrap>
        </LeftPanel>
        <Canvas>
          <CanvasArt viewBox="110 64 1319 723">
            <circle cx="681" cy="158" r="39" fill="#0a28ff" />
            <circle cx="681" cy="158" r="32" fill="#ff1ff0" />
            <circle cx="681" cy="427" r="39" fill="#0a28ff" />
            <circle cx="681" cy="427" r="32" fill="#ff1ff0" />
            <rect x="709" y="423" width="4" height="7" fill="#40c040" />
            <rect x="712" y="423" width="8" height="7" fill="#ffd820" />
            <rect x="719" y="423" width="3" height="7" rx="1" fill="#fff" />
          </CanvasArt>
        </Canvas>
      </Workspace>
      <BottomBar>
        <ToolBtn><ToolGlyph kind={0} /></ToolBtn>
        <ToolBtn><ToolGlyph kind={1} /></ToolBtn>
        <ToolBtn $pressed><ToolGlyph kind={2} /></ToolBtn>
        <CoordLabel>X</CoordLabel>
        <CoordInput />
        <SmallBtn />
        <Message>{'<M1> Global selection'}</Message>
        <UnitWrap><Dropdown>Inch<DropMark /></Dropdown></UnitWrap>
      </BottomBar>

      {/* checks window, behind the two others */}
      <Win $l={1047} $t={63} $w={392} $h={717}>
        <WinTitle $h={18}>
          <WinTitleText />
          <CloseX><XMark /></CloseX>
        </WinTitle>
        <ChecksBody>
          <ChecksTop />
          <ChecksGap />
          <ChecksMain>
            <ChecksCol>
              <Blocks>
                <BlocksInner>
                  <Block c="#18e018" />
                  <Block c="#ff2020" bang />
                  <Block c="#18e018" />
                  <Block c="#ff2020" bang />
                  <SilkRow>
                    <Trees />
                    <SilkName>Silk Screen Checks</SilkName>
                    <ErfBtn>ERF</ErfBtn>
                    <SilkInput />
                    <QBtn><QInner>?</QInner></QBtn>
                  </SilkRow>
                </BlocksInner>
              </Blocks>
              <ParamRow>
                <ParamBtn $w={94} $clip>arameters...</ParamBtn>
                <ParamBtn $w={129}>Ranges...</ParamBtn>
                <ParamBtn $w={126}>Online...</ParamBtn>
              </ParamRow>
              <ProgRow>
                <IconBtn $w={30} $h={30}><Runner /></IconBtn>
                <IconBtn $w={30} $h={30}><Runner red /></IconBtn>
                <ProgCenter>{'07 Mar 2014\n12:18 AM - 0:00:05'}</ProgCenter>
                <IconBtn $w={30} $h={30}><Magnifier /></IconBtn>
                <StatusLight $c="#ff2020" $h={34} $ml={-3}>!!</StatusLight>
              </ProgRow>
              <ProgMsg><ProgMsgIn>Silk Screen layers processed</ProgMsgIn></ProgMsg>
              <CheckHS>
                <Arrow d="l" />
                <HSDark />
                <HThumb />
                <Arrow d="r" />
              </CheckHS>
              <CloseWrap><CheckClose>Close</CheckClose></CloseWrap>
            </ChecksCol>
            <Trough>
              <Arrow d="u" />
              <Arrow d="d" />
            </Trough>
          </ChecksMain>
        </ChecksBody>
      </Win>

      {/* results histogram */}
      <Win $l={911} $t={65} $w={469} $h={563}>
        <WinTitle $h={16}>
          <WindowIcon />
          <WinTitleText>Results histogram</WinTitleText>
          <CloseX $mr={2}><XMark /></CloseX>
        </WinTitle>
        <HistBody>
          <Upper>
            <HistLeft>
              <Radios>
                {RADIOS.map(r => (
                  <RadioRow key={r}><Diamond on={r === 'Min'} />{r}</RadioRow>
                ))}
              </Radios>
              <HistList>
                <SmallList>
                  <ListItem $sel $w={72} $fg={TEAL}>Spacing</ListItem>
                </SmallList>
                <VScroll h={114} teal />
              </HistList>
              <Pair>
                <DotButton label="DEL" color="#e81818" />
                <DotButton label="REF" color="#18d818" />
              </Pair>
            </HistLeft>
            <HistRight>
              <ChartPanel>
                <ChartTitle>Size(Spacing) / Min(Spacing)</ChartTitle>
                <Bars>
                  {BARS.map(b => (
                    <BarCol key={b.v}>
                      <BarValue $min={b.min}>{b.v}</BarValue>
                      <BarRect style={{ height: b.h }} />
                    </BarCol>
                  ))}
                </Bars>
                <AxisRule />
                <Axis>
                  {BARS.map(b => (
                    <AxisCell key={b.v}>
                      <AxisLine $pl={b.ap}>{b.a}</AxisLine>
                      <AxisLine $pl={b.bp}>{b.b}</AxisLine>
                    </AxisCell>
                  ))}
                </Axis>
                <HScroll w={343} mt={7} teal />
              </ChartPanel>
              <ResRow>
                <ResList>
                  <ListItem $sel $w={62} $fg={TEAL}>Spacing</ListItem>
                  <ListItem>Via</ListItem>
                </ResList>
                <VScroll h={59} teal ml={0} />
                <ResPanel>
                  <ResTitle>Resolution</ResTitle>
                  <ResValue>0.1</ResValue>
                  <ResTrack><ResThumb /><ResThumb /></ResTrack>
                </ResPanel>
              </ResRow>
            </HistRight>
          </Upper>
          <Sash />
          <Preview>
            <Thumb>
              <svg width="136" height="118" viewBox="488 92 408 354">
                {DOTS.map(([x, y], i) => (
                  <rect key={i} x={x - 5} y={y - 5} width="10" height="10" fill="#d21ede" />
                ))}
                <rect x="751" y="383" width="27" height="18" fill="none" stroke="#000" strokeWidth="3" strokeDasharray="10 5" />
              </svg>
            </Thumb>
          </Preview>
          <Footer>
            <DotButton label="DEL" color="#e81818" w={30} h={35} />
            <DotButton label="REF" color="#18d818" w={30} h={35} />
            <FootLabel>1786 measurements for 2 layers</FootLabel>
            <IconBtn $w={38} $h={38}><HistSwap /></IconBtn>
            <IconBtn $w={38} $h={38}><HistSwap back /></IconBtn>
          </Footer>
          <HistClose>Close</HistClose>
        </HistBody>
      </Win>

      {/* results viewer */}
      <Win $l={110} $t={29} $w={501} $h={779}>
        <WinTitle $active $h={19}>
          <WindowIcon />
          <WinTitleText>Results viewer</WinTitleText>
          <CloseX><XMark /></CloseX>
        </WinTitle>
        <WinBody>
          <HeadStrip><HeadBtn>Solder Mask Checks</HeadBtn></HeadStrip>
          <BlackRule $h={3} />
          <Cols>
            <LeftCol>
              <TabRow>
                <TabBtn $w={46}>None</TabBtn>
                <TabBtn $w={77} $ml={2} $flat>Layers</TabBtn>
                <TabBtn $w={38} $ml={3}>All</TabBtn>
              </TabRow>
              <ListWrap $h={563}>
                <ListBox $w={149} $pt={3} $pl={5}>
                  <ListItem $sel $w={140}>ts</ListItem>
                  <ListItem $sel $w={140}>bs</ListItem>
                </ListBox>
                <VScroll h={561} />
              </ListWrap>
              <HScroll w={150} mt={7} />
              <ReplaceWrap>
                <DropSlot $h={28} $w={160}>
                  <Dropdown>Replace layers<DropMark /></Dropdown>
                </DropSlot>
              </ReplaceWrap>
            </LeftCol>
            <RightCol>
              <CatRow>
                <CatBtn>Categories (10)</CatBtn>
                <MeasLabel>Meas:</MeasLabel>
                <DropSlot $w={59}><Dropdown>All<DropMark /></Dropdown></DropSlot>
              </CatRow>
              <ListWrap $h={505}>
                <ListBox $w={305} $pt={5} $pl={4}>
                  {CATS.map((c, i) => (
                    <ListItem key={c} $sel={i === 0} $w={i === 0 ? 293 : undefined}>{c}</ListItem>
                  ))}
                </ListBox>
                <VScroll h={503} />
              </ListWrap>
              <HScroll w={305} mt={4} />
              <NavRow>
                <NavBtn $w={53}>First</NavBtn>
                <NavBtn $w={45}>{'<---'}</NavBtn>
                <NavBtn $w={45} $on>{'--->'}</NavBtn>
                <NavBtn $w={44}>Last</NavBtn>
                <IndexLabel>Index:</IndexLabel>
                <IndexInput><Caret />3109</IndexInput>
              </NavRow>
              <AutoRow>
                <AutoWrap><Dropdown>Auto Zoom<DropMark /></Dropdown></AutoWrap>
                <SvLabel>Sv:</SvLabel>
                <SvWrap><Dropdown $green><span /><DropMark /></Dropdown></SvWrap>
                <ShowAll><ShowBox />Show All</ShowAll>
              </AutoRow>
              <ActionRow>
                <DotButton label="DEL" color="#e81818" />
                <DotButton label="REF" color="#18d818" />
                <UndoButton />
              </ActionRow>
            </RightCol>
          </Cols>
          <BlackRule />
          <StatusLine>bs 2.002mil  r17.717</StatusLine>
          <BlackRule />
          <CreamLine>ERF--&gt; ar_via = 6 9 10</CreamLine>
          <BottomRow>
            <BigClose>Close</BigClose>
            <IconBtn $mr={5}><Icon1 /></IconBtn>
            <IconBtn $mr={4}><Icon2 /></IconBtn>
            <IconBtn $mr={4}><Icon3 /></IconBtn>
            <IconBtn $mr={4}><Icon4 /></IconBtn>
            <IconBtn $mr={3}><Icon5 /></IconBtn>
            <IconBtn $red><Icon6 /></IconBtn>
          </BottomRow>
        </WinBody>
      </Win>
    </Desktop>
  );
}
